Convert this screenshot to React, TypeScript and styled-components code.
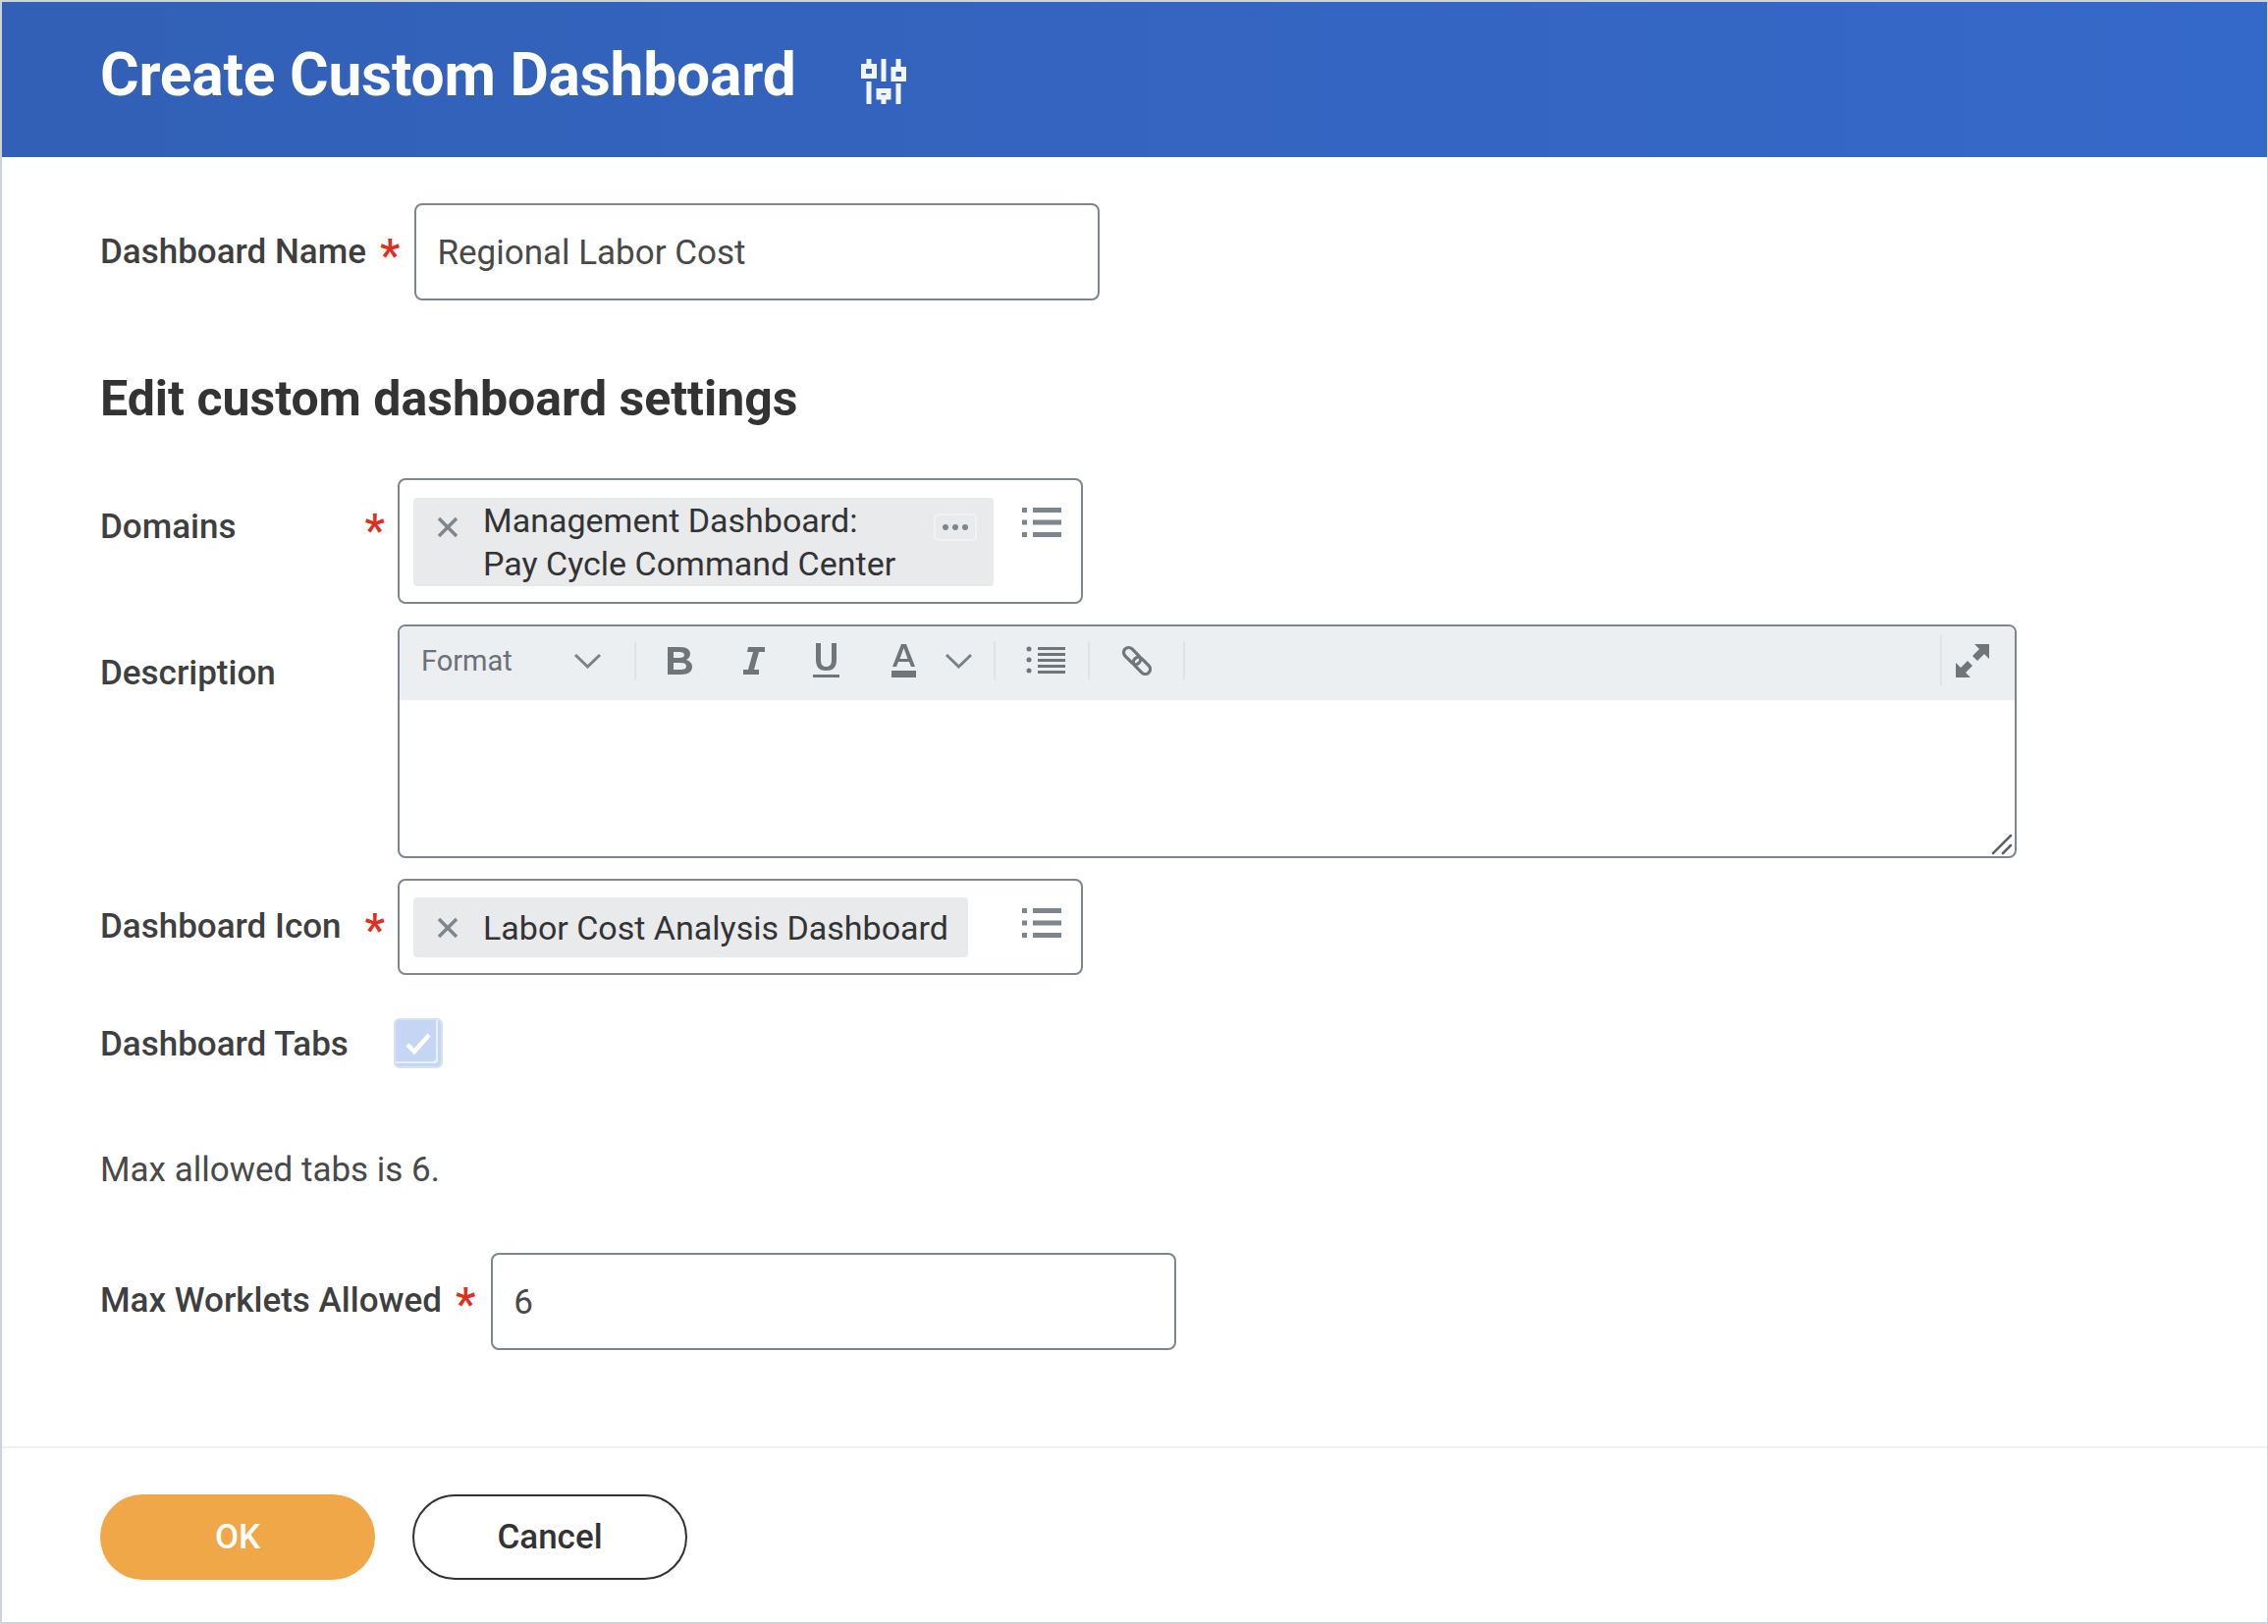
import React from "react";
import styled, { createGlobalStyle } from "styled-components";

const Global = createGlobalStyle`
  html, body { margin: 0; padding: 0; background: #fff; }
  * { box-sizing: border-box; }
  body { font-family: Roboto, "Liberation Sans", sans-serif; color: #333; }
`;

const Card = styled.div`
  width: 2310px;
  height: 1654px;
  border: 2px solid #ccd3dd;
  border-right-width: 1px;
  display: flex;
  flex-direction: column;
  background: #fff;
`;
const Header = styled.header`
  height: 158px;
  flex: none;
  background: linear-gradient(90deg, #3260b6 0%, #3464c0 50%, #3569c9 100%);
  display: flex;
  align-items: center;
  padding-left: 100px;
  color: #fff;
`;
const Title = styled.h1`
  margin: 0 0 9px;
  font-size: 60.500px;
  line-height: 70px;
  font-weight: 700;
  letter-spacing: -0.2px;
`;
const HeaderIcon = styled.svg`
  width: 46px;
  height: 46px;
  margin-left: 66px;
  margin-top: 4px;
  color: #f0f4fb;
`;
const Body = styled.main`
  flex: 1;
  padding: 47px 0 0 100px;
`;
const Row = styled.div<{ $top?: number }>`
  display: flex;
  align-items: flex-start;
  margin-top: ${(p) => p.$top ?? 0}px;
`;
const Label = styled.label<{ $width?: number; $pad: number }>`
  flex: none;
  width: ${(p) => (p.$width ? p.$width + "px" : "auto")};
  padding-top: ${(p) => p.$pad}px;
  display: flex;
  justify-content: space-between;
  font-size: 35px;
  line-height: 44px;
  font-weight: 500;
  color: #3f3f3f;
`;
const Required = styled.span<{ $left?: number; $right?: number }>`
  color: #de2f22;
  font-size: 46px;
  line-height: 50px;
  font-weight: 500;
  margin-left: ${(p) => p.$left ?? 0}px;
  margin-right: ${(p) => p.$right ?? 0}px;
`;
const TextInput = styled.div<{ $left: number }>`
  width: 698px;
  height: 99px;
  margin-left: ${(p) => p.$left}px;
  border: 2px solid #7f858f;
  border-radius: 8px;
  padding: 2px 21px 0;
  display: flex;
  align-items: center;
  font-size: 35px;
  color: #494949;
`;
const Heading = styled.h2`
  margin: 70px 0 0;
  font-size: 50px;
  line-height: 60px;
  font-weight: 700;
  color: #333;
`;
const Prompt = styled.div<{ $height: number; $top: string }>`
  width: 698px;
  height: ${(p) => p.$height}px;
  border: 2px solid #7f858f;
  border-radius: 8px;
  padding: ${(p) => p.$top} 20px 0 14px;
  display: flex;
  justify-content: space-between;
  align-items: flex-start;
`;
const Chip = styled.div<{ $width: number; $height: number }>`
  width: ${(p) => p.$width}px;
  height: ${(p) => p.$height}px;
  border-radius: 4px;
  background: #e9eaec;
  display: flex;
  align-items: center;
  padding-left: 24px;
  font-size: 34px;
  line-height: 44px;
  color: #333;
`;
const ChipText = styled.span`
  margin-left: 25px;
  width: 440px;
  flex: none;
  white-space: pre-line;
`;
const ChipTextWide = styled(ChipText)`
  width: auto;
`;
const CloseIcon = styled.svg<{ $raise: number }>`
  width: 22px;
  height: 22px;
  flex: none;
  margin-bottom: ${(p) => p.$raise}px;
  color: #7f858c;
`;
const DotsButton = styled.div`
  width: 44px;
  height: 28px;
  margin: 0 0 30px 19px;
  border: 2px solid #f1f2f3;
  border-radius: 5px;
  display: flex;
  align-items: center;
  justify-content: center;
  color: #7f858c;
`;
const ListIcon = styled.svg<{ $top: number }>`
  width: 40px;
  height: 30px;
  margin-top: ${(p) => p.$top}px;
  flex: none;
  color: #7f858c;
`;
const Editor = styled.div`
  position: relative;
  width: 1649px;
  height: 238px;
  border: 2px solid #7f858f;
  border-radius: 8px;
  overflow: hidden;
`;
const Toolbar = styled.div`
  height: 75px;
  padding-bottom: 6px;
  background: #ebeff2;
  display: flex;
  align-items: center;
`;
const FormatSelect = styled.div`
  width: 239px;
  padding: 0 33px 0 22px;
  display: flex;
  align-items: center;
  justify-content: space-between;
  font-size: 29px;
  color: #6c7176;
`;
const Separator = styled.span<{ $left?: number; $height?: number }>`
  flex: none;
  width: 2px;
  height: ${(p) => p.$height ?? 40}px;
  margin-left: ${(p) => p.$left ?? 0}px;
  background: #dfe3e6;
  border-radius: 1px;
`;
const ToolButton = styled.span<{ $width: number }>`
  flex: none;
  width: ${(p) => p.$width}px;
  display: flex;
  justify-content: center;
  align-items: center;
  color: #70757a;
`;
const Spacer = styled.span`
  flex: 1;
`;
const ToolIcon = styled.svg<{ $w: number; $h: number }>`
  width: ${(p) => p.$w}px;
  height: ${(p) => p.$h}px;
  display: block;
`;
const Grip = styled.svg`
  position: absolute;
  right: 1px;
  bottom: 1px;
  width: 24px;
  height: 24px;
  color: #5e6268;
`;
const Check = styled.div`
  width: 50px;
  height: 51px;
  margin-left: -4px;
  border-radius: 6px;
  background: #c5d6f4;
  border: 2px solid #d5e1f7;
  box-shadow: inset -3px -3px 0 #c5d6f4, inset -5px -5px 0 #eaf0fb;
  display: flex;
  align-items: center;
  justify-content: center;
  color: #fff;
`;
const Note = styled.p`
  margin: 82px 0 0;
  font-size: 35px;
  line-height: 44px;
  color: #494949;
`;
const Footer = styled.footer`
  flex: none;
  height: 179px;
  border-top: 2px solid #eff0f2;
  padding: 47px 0 0 100px;
  display: flex;
  gap: 38px;
  align-items: flex-start;
`;
const PrimaryButton = styled.button`
  width: 280px;
  height: 87px;
  border: 0;
  border-radius: 44px;
  background: #efa747;
  color: #fff;
  font: 500 35px Roboto, sans-serif;
`;
const SecondaryButton = styled.button`
  width: 280px;
  height: 87px;
  border: 2px solid #333;
  border-radius: 44px;
  background: #fff;
  color: #333;
  font: 500 35px Roboto, sans-serif;
`;

const Close = ({ raise = 0 }: { raise?: number }) => (
  <CloseIcon $raise={raise} viewBox="0 0 22 22">
    <path d="M2 2L20 20M20 2L2 20" stroke="currentColor" strokeWidth="3.500" fill="none" />
  </CloseIcon>
);
const List = ({ top }: { top: number }) => (
  <ListIcon $top={top} viewBox="0 0 40 30" fill="currentColor">
    <rect x="0" y="0" width="5" height="5" />
    <rect x="11" y="0" width="29" height="5" />
    <rect x="0" y="12.500" width="5" height="5" />
    <rect x="11" y="12.500" width="29" height="5" />
    <rect x="0" y="25" width="5" height="5" />
    <rect x="11" y="25" width="29" height="5" />
  </ListIcon>
);
const Chevron = () => (
  <ToolIcon $w={29} $h={16} viewBox="0 0 29 16">
    <path d="M2 2L14.500 14L27 2" stroke="#7c8186" strokeWidth="3" fill="none" />
  </ToolIcon>
);

export default function App() {
  return (
    <>
      <Global />
      <Card>
        <Header>
          <Title>Create Custom Dashboard</Title>
          <HeaderIcon viewBox="0 0 46 46" fill="none" stroke="currentColor" strokeWidth="5">
            <path d="M8 0V6M8 23V46M23 0V23M23 40V46M38 0V9M38 25V46" />
            <rect x="2.500" y="7.500" width="11" height="10" />
            <rect x="18" y="32.500" width="10" height="6.500" />
            <rect x="33" y="10.500" width="10.500" height="10" />
          </HeaderIcon>
        </Header>
        <Body>
          <Row>
            <Label $pad={28}>
              Dashboard Name
              <Required $left={14}>*</Required>
            </Label>
            <TextInput $left={15}>Regional Labor Cost</TextInput>
          </Row>
          <Heading>Edit custom dashboard settings</Heading>
          <Row $top={51}>
            <Label $width={303} $pad={28}>
              Domains
              <Required $right={13}>*</Required>
            </Label>
            <Prompt $height={128} $top="18px">
              <Chip $width={591} $height={90}>
                <Close raise={30} />
                <ChipText>{"Management Dashboard:\nPay Cycle Command Center"}</ChipText>
                <DotsButton>
                  <ToolIcon $w={26} $h={6} viewBox="0 0 26 6" fill="currentColor">
                    <circle cx="3" cy="3" r="3" />
                    <circle cx="13" cy="3" r="3" />
                    <circle cx="23" cy="3" r="3" />
                  </ToolIcon>
                </DotsButton>
              </Chip>
              <List top={10} />
            </Prompt>
          </Row>
          <Row $top={21}>
            <Label $width={303} $pad={28}>Description</Label>
            <Editor>
              <Toolbar>
                <FormatSelect>
                  Format
                  <Chevron />
                </FormatSelect>
                <Separator />
                <ToolButton $width={88}>
                  <ToolIcon $w={25} $h={28} viewBox="0 0 25 28" fill="currentColor">
                    <path fillRule="evenodd" d="M0 0H13C20 0 23 3 23 7C23 10 21 12 19 13C22 14 25 16 25 20C25 25 21 28 14 28H0ZM6 5V11H12C15 11 17 10 17 8C17 6 15 5 12 5ZM6 16V23H13C17 23 19 22 19 19.500C19 17 17 16 13 16Z" />
                  </ToolIcon>
                </ToolButton>
                <ToolButton $width={64}>
                  <ToolIcon $w={22} $h={28} viewBox="0 0 22 28" fill="currentColor">
                    <path d="M5 0H22V5H16L11 23H16V28H0V23H5L10 5H4Z" />
                  </ToolIcon>
                </ToolButton>
                <ToolButton $width={82}>
                  <ToolIcon $w={27} $h={35} viewBox="0 0 27 35" fill="currentColor">
                    <path d="M3 0H8V17C8 22 10 24 13.500 24C17 24 19 22 19 17V0H24V17C24 25 20 28 13.500 28C7 28 3 25 3 17Z" />
                    <rect y="32" width="27" height="3" />
                  </ToolIcon>
                </ToolButton>
                <ToolButton $width={76}>
                  <ToolIcon $w={25} $h={34} viewBox="0 0 25 34" fill="currentColor">
                    <path fillRule="evenodd" d="M10 0H15L24 23H20L18 18H7L5 23H1ZM12.500 4L8.500 15H16.500Z" />
                    <rect y="27" width="25" height="7" />
                  </ToolIcon>
                </ToolButton>
                <ToolButton $width={36}>
                  <Chevron />
                </ToolButton>
                <Separator $left={18} />
                <ToolButton $width={102}>
                  <ToolIcon $w={40} $h={29} viewBox="0 0 40 29" fill="currentColor">
                    <circle cx="3" cy="3" r="2.500" />
                    <circle cx="3" cy="14" r="2.500" />
                    <circle cx="3" cy="25" r="2.500" />
                    <rect x="12" y="1" width="28" height="3" />
                    <rect x="12" y="7" width="28" height="3" />
                    <rect x="12" y="13" width="28" height="3" />
                    <rect x="12" y="19" width="28" height="3" />
                    <rect x="12" y="25" width="28" height="3" />
                  </ToolIcon>
                </ToolButton>
                <Separator $left={-8} />
                <ToolButton $width={95}>
                  <ToolIcon $w={32} $h={32} viewBox="0 0 32 32" fill="none" stroke="currentColor" strokeWidth="3.200">
                    <g transform="rotate(45 16 16)">
                      <rect x="-1" y="11" width="20" height="10" rx="5" />
                      <rect x="13" y="11" width="20" height="10" rx="5" />
                    </g>
                  </ToolIcon>
                </ToolButton>
                <Separator />
                <Spacer />
                <Separator $height={52} />
                <ToolButton $width={62}>
                  <ToolIcon $w={34} $h={34} viewBox="0 0 34 34" fill="currentColor">
                    <path d="M19 0H34V15L29 10L22 17L17 12L24 5Z" />
                    <path d="M0 34V19L5 24L12 17L17 22L10 29L15 34Z" />
                  </ToolIcon>
                </ToolButton>
                <Separator $left={10} $height={0} />
              </Toolbar>
              <Grip viewBox="0 0 24 24" fill="none" stroke="currentColor" strokeWidth="2.500" strokeLinecap="round">
                <path d="M3 22L21 4M13 22L21 14" />
              </Grip>
            </Editor>
          </Row>
          <Row $top={21}>
            <Label $width={303} $pad={27}>
              Dashboard Icon
              <Required $right={13}>*</Required>
            </Label>
            <Prompt $height={98} $top="17px">
              <Chip $width={565} $height={61}>
                <Close />
                <ChipTextWide>Labor Cost Analysis Dashboard</ChipTextWide>
              </Chip>
              <List top={11} />
            </Prompt>
          </Row>
          <Row $top={44}>
            <Label $width={303} $pad={5}>Dashboard Tabs</Label>
            <Check>
              <ToolIcon $w={28} $h={24} viewBox="0 0 28 24">
                <path d="M3 13L10 20L25 3" stroke="currentColor" strokeWidth="4.500" fill="none" />
              </ToolIcon>
            </Check>
          </Row>
          <Note>Max allowed tabs is 6.</Note>
          <Row $top={62}>
            <Label $pad={27}>
              Max Worklets Allowed
              <Required $left={14}>*</Required>
            </Label>
            <TextInput $left={16}>6</TextInput>
          </Row>
        </Body>
        <Footer>
          <PrimaryButton>OK</PrimaryButton>
          <SecondaryButton>Cancel</SecondaryButton>
        </Footer>
      </Card>
    </>
  );
}
